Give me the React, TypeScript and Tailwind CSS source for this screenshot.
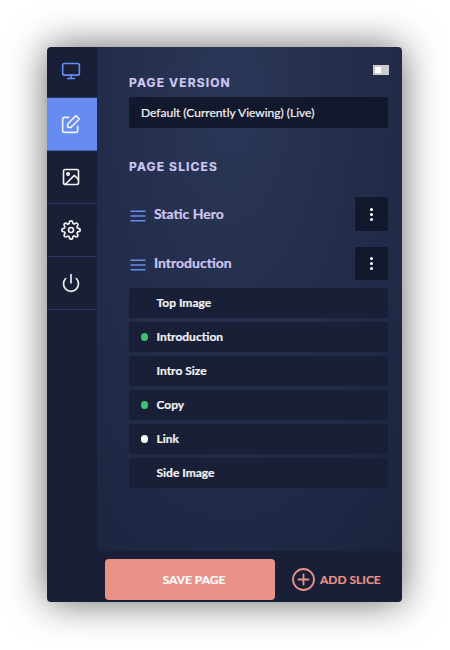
import { ReactNode } from "react";

function Icon({ children, className }: { children: ReactNode; className: string }) {
  return (
    <svg
      width="20"
      height="20"
      viewBox="0 0 24 24"
      fill="none"
      stroke="currentColor"
      strokeWidth="2"
      strokeLinecap="round"
      strokeLinejoin="round"
      className={className}
    >
      {children}
    </svg>
  );
}

function Sidebar() {
  return (
    <nav className="w-[50px] shrink-0 bg-[#181f37] text-[#efefef]">
      <div className="flex h-[51px] items-center justify-center border-b border-[#27376b] pr-[2px] pb-[2px] text-[#668cef]">
        <Icon className="shrink-0">
          <rect x="2" y="3" width="20" height="14" rx="2" />
          <path d="M8 21h8M12 17v4" />
        </Icon>
      </div>
      <div className="flex h-[53px] items-center justify-center border-b border-[#4462ae] bg-[#668cef] pr-[2px]">
        <Icon className="shrink-0">
          <path d="M20 14.66V20a2 2 0 0 1-2 2H4a2 2 0 0 1-2-2V6a2 2 0 0 1 2-2h5.34" />
          <polygon points="18 2 22 6 12 16 8 16 8 12 18 2" />
        </Icon>
      </div>
      <div className="flex h-[53px] items-center justify-center border-b border-[#27376b] pr-[2px]">
        <Icon className="shrink-0">
          <rect x="3" y="3" width="18" height="18" rx="2" />
          <circle cx="8.5" cy="8.5" r="1.5" />
          <path d="M21 15l-5-5L5 21" />
        </Icon>
      </div>
      <div className="flex h-[53px] items-center justify-center border-b border-[#27376b] pr-[2px]">
        <Icon className="shrink-0">
          <circle cx="12" cy="12" r="3" />
          <path d="M19.4 15a1.65 1.65 0 0 0 .33 1.82l.06.06a2 2 0 0 1 0 2.83 2 2 0 0 1-2.83 0l-.06-.06a1.65 1.65 0 0 0-1.82-.33 1.65 1.65 0 0 0-1 1.51V21a2 2 0 0 1-2 2 2 2 0 0 1-2-2v-.09A1.65 1.65 0 0 0 9 19.4a1.65 1.65 0 0 0-1.82.33l-.06.06a2 2 0 0 1-2.83 0 2 2 0 0 1 0-2.83l.06-.06a1.65 1.65 0 0 0 .33-1.82 1.65 1.65 0 0 0-1.51-1H3a2 2 0 0 1-2-2 2 2 0 0 1 2-2h.09A1.65 1.65 0 0 0 4.6 9a1.65 1.65 0 0 0-.33-1.82l-.06-.06a2 2 0 0 1 0-2.83 2 2 0 0 1 2.83 0l.06.06a1.65 1.65 0 0 0 1.82.33H9a1.65 1.65 0 0 0 1-1.51V3a2 2 0 0 1 2-2 2 2 0 0 1 2 2v.09a1.65 1.65 0 0 0 1 1.51 1.65 1.65 0 0 0 1.82-.33l.06-.06a2 2 0 0 1 2.83 0 2 2 0 0 1 0 2.83l-.06.06a1.65 1.65 0 0 0-.33 1.82V9a1.65 1.65 0 0 0 1.51 1H21a2 2 0 0 1 2 2 2 2 0 0 1-2 2h-.09a1.65 1.65 0 0 0-1.51 1z" />
        </Icon>
      </div>
      <div className="flex h-[53px] items-center justify-center border-b border-[#27376b] pr-[2px]">
        <Icon className="shrink-0">
          <path d="M18.36 6.64a9 9 0 1 1-12.73 0M12 2v10" />
        </Icon>
      </div>
    </nav>
  );
}

function SliceHeader({ title, className, titleClass }: { title: string; className: string; titleClass: string }) {
  return (
    <div className={"flex items-center " + className}>
      <svg width="16" height="12" viewBox="0 0 16 12" className="ml-px mt-[3px] shrink-0" stroke="#668cef" strokeWidth="1.4" strokeLinecap="round">
        <path d="M1 1.3h14M1 6h14M1 10.7h14" />
      </svg>
      <span className={"ml-2 text-[14px] leading-5 font-bold text-[#cfc8f2] " + titleClass}>{title}</span>
      <button className="ml-auto flex h-full w-[33px] flex-col items-center justify-center gap-[2px] rounded-[2px] bg-[#12182d]">
        <i className="size-[3px] rounded-full bg-white" />
        <i className="size-[3px] rounded-full bg-white" />
        <i className="size-[3px] rounded-full bg-white" />
      </button>
    </div>
  );
}

const fields = [
  { name: "Top Image", dot: "bg-transparent" },
  { name: "Introduction", dot: "bg-[#3cc172]" },
  { name: "Intro Size", dot: "bg-transparent" },
  { name: "Copy", dot: "bg-[#3cc172]" },
  { name: "Link", dot: "bg-white" },
  { name: "Side Image", dot: "bg-transparent" },
];

export default function App() {
  return (
    <div className="h-[650px] w-[450px] overflow-hidden bg-white p-[47px] font-['Lato',sans-serif]">
      <div className="flex h-[555px] w-[355px] rounded-[4px] shadow-[0_0_38px_rgba(0,0,0,0.6)]">
        <div className="flex w-full overflow-hidden rounded-[4px]">
          <Sidebar />
          <div className="flex min-w-0 flex-1 flex-col">
            <main className="h-[504px] bg-[radial-gradient(ellipse_270px_600px_at_44%_8%,#2b3757_0%,#202945_70%,#1b243f_100%)] pr-[14px] pl-8">
              <div className="flex h-[28px] justify-end pt-[18px]">
                <div className="-mr-px h-[10px] w-4 bg-[#cccccc] pt-[2px] pl-[2px]">
                  <div className="size-[6px] bg-white" />
                </div>
              </div>
              <h2 className="h-[22px] font-['Inter',sans-serif] text-[12px] leading-[16px] font-bold tracking-[1.15px] text-[#cfc8f2] [-webkit-text-stroke:0.2px]">PAGE VERSION</h2>
              <div className="flex h-[31px] items-center rounded-[2px] bg-[#12182d] px-3 text-[12px] text-[#f3f3f3] [-webkit-text-stroke:0.2px]">
                Default (Currently Viewing) (Live)
              </div>
              <h2 className="mt-[31px] h-[38px] font-['Inter',sans-serif] text-[12px] leading-[16px] font-bold tracking-[1.15px] text-[#cfc8f2] [-webkit-text-stroke:0.2px]">PAGE SLICES</h2>
              <SliceHeader title="Static Hero" className="h-[34px]" titleClass="[-webkit-text-stroke:0.2px]" />
              <SliceHeader title="Introduction" className="mt-4 h-[33px]" titleClass="mb-[2px] [-webkit-text-stroke:0.2px]" />
              <ul className="mt-2 flex flex-col gap-1">
                {fields.map((f) => (
                  <li key={f.name} className="flex h-[30px] items-center rounded-[2px] bg-[#181f37] pl-3 text-[12px] font-bold text-[#f3f3f3] [-webkit-text-stroke:0.2px]">
                    <span className={"mr-[8.5px] h-2 w-[7px] rounded-full " + f.dot} />
                    {f.name}
                  </li>
                ))}
              </ul>
            </main>
            <footer className="flex h-[51px] bg-[#181f37] pt-2 pl-2">
              <button className="h-[41px] w-[170px] rounded-[4px] bg-[#ea9188] pl-2 text-[12px] font-bold text-white [-webkit-text-stroke:0.2px]">SAVE PAGE</button>
              <button className="ml-[17px] flex h-[41px] items-center text-[12px] font-bold text-[#ea9188]">
                <svg width="23" height="23" viewBox="0 0 23 23" fill="none" stroke="currentColor" strokeWidth="1.8" className="mr-[5px]">
                  <circle cx="11.5" cy="11.5" r="10.5" />
                  <path d="M11.5 6.5v10M6.5 11.5h10" strokeLinecap="round" />
                </svg>
                <span className="[-webkit-text-stroke:0.2px]">ADD SLICE</span>
              </button>
            </footer>
          </div>
        </div>
      </div>
    </div>
  );
}
